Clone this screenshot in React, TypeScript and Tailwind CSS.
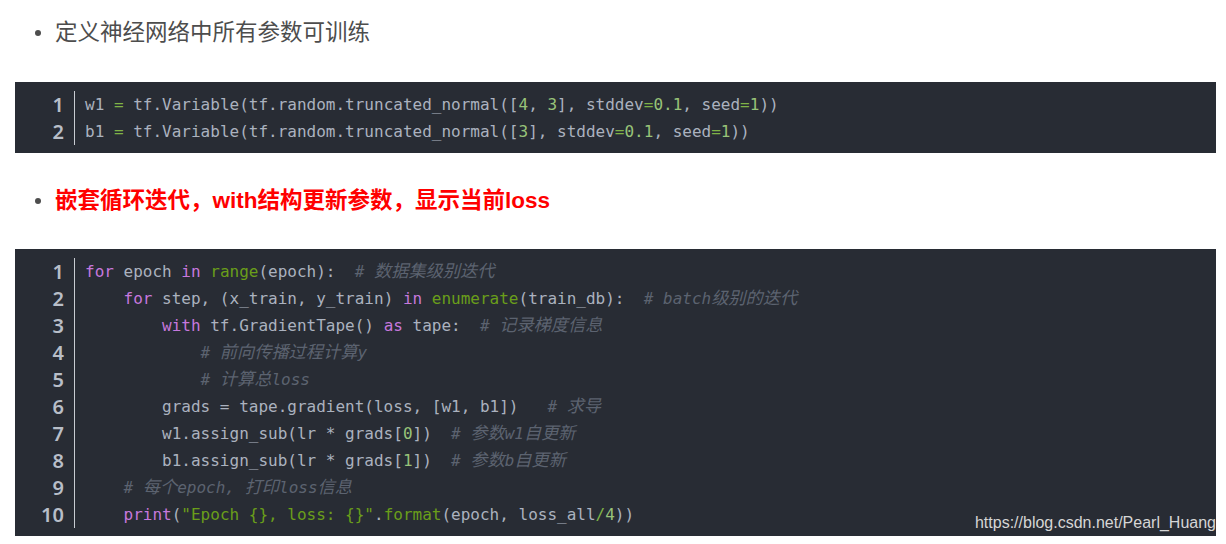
type Tok = [string, string?];

const C = {
  kw: "text-[#c678dd]",
  fn: "text-[#6a9e1a]",
  num: "text-[#98c379]",
  op: "text-[#7fb347]",
  cm: "text-[#5c6370] italic",
};

const Comment = ({ text }: { text: string }) => {
  const parts = text.split(/([\u3000-\u9fff\uff00-\uffef]+)/).filter(Boolean);
  return (
    <span className={C.cm}>
      {parts.map((p, i) =>
        /[\u3000-\u9fff\uff00-\uffef]/.test(p) ? (
          <span key={i} className="text-[17.2px]">
            {p}
          </span>
        ) : (
          <span key={i}>{p}</span>
        )
      )}
    </span>
  );
};

const block1: Tok[][] = [
  [
    ["w1 "],
    ["=", C.op],
    [" tf.Variable(tf.random.truncated_normal(["],
    ["4", C.num],
    [", "],
    ["3", C.num],
    ["], stddev"],
    ["=", C.op],
    ["0.1", C.num],
    [", seed"],
    ["=", C.op],
    ["1", C.num],
    ["))"],
  ],
  [
    ["b1 "],
    ["=", C.op],
    [" tf.Variable(tf.random.truncated_normal(["],
    ["3", C.num],
    ["], stddev"],
    ["=", C.op],
    ["0.1", C.num],
    [", seed"],
    ["=", C.op],
    ["1", C.num],
    ["))"],
  ],
];

const block2: Tok[][] = [
  [["for", C.kw], [" epoch "], ["in", C.kw], [" "], ["range", C.fn], ["(epoch):  "], ["# 数据集级别迭代", "cm"]],
  [
    ["    "],
    ["for", C.kw],
    [" step, (x_train, y_train) "],
    ["in", C.kw],
    [" "],
    ["enumerate", C.fn],
    ["(train_db):  "],
    ["# batch级别的迭代", "cm"],
  ],
  [["        "], ["with", C.kw], [" tf.GradientTape() "], ["as", C.kw], [" tape:  "], ["# 记录梯度信息", "cm"]],
  [["            "], ["# 前向传播过程计算y", "cm"]],
  [["            "], ["# 计算总loss", "cm"]],
  [["        grads = tape.gradient(loss, [w1, b1])   "], ["# 求导", "cm"]],
  [["        w1.assign_sub(lr * grads["], ["0", C.num], ["])  "], ["# 参数w1自更新", "cm"]],
  [["        b1.assign_sub(lr * grads["], ["1", C.num], ["])  "], ["# 参数b自更新", "cm"]],
  [["    "], ["# 每个epoch, 打印loss信息", "cm"]],
  [
    ["    "],
    ["print", C.kw],
    ["("],
    ['"Epoch {}, loss: {}"', C.fn],
    ["."],
    ["format", C.fn],
    ["(epoch, loss_all"],
    ["/", C.op],
    ["4", C.num],
    ["))"],
  ],
];

const CodeBlock = ({ lines, watermark }: { lines: Tok[][]; watermark?: boolean }) => (
  <div className="relative w-[1201px] bg-[#282c34] pt-[9px] pb-[8px]">
    <div className="flex">
      <div className="w-[60px] border-r border-[#c8ccd2] pr-[10px] text-right font-['Noto_Sans','Liberation_Sans',sans-serif] text-[20px] font-semibold leading-[27px] text-[#b8bec8]">
        {lines.map((_, i) => (
          <div key={i}>{i + 1}</div>
        ))}
      </div>
      <div className="pl-[10px] font-['DejaVu_Sans_Mono','Noto_Sans_CJK_SC',monospace] text-[16px] leading-[27px] text-[#abb2bf]">
        {lines.map((line, i) => (
          <div key={i} className="whitespace-pre">
            {line.map(([t, c], j) =>
              c === "cm" ? (
                <Comment key={j} text={t} />
              ) : (
                <span key={j} className={c}>
                  {t}
                </span>
              )
            )}
          </div>
        ))}
      </div>
    </div>
    {watermark && (
      <div className="absolute right-0 bottom-[4px] font-['Liberation_Sans',sans-serif] text-[16px] leading-[18px] text-[#d6d6d6]">
        https://blog.csdn.net/Pearl_Huang
      </div>
    )}
  </div>
);

const Bullet = ({ text, red }: { text: string; red?: boolean }) => (
  <div className="flex items-center pl-[35px]">
    <span className="mr-[14px] h-[6px] w-[6px] rounded-full bg-[#4d4d4d]" />
    <span
      className={
        red
          ? "font-['Liberation_Sans','Noto_Sans_CJK_SC',sans-serif] text-[22.5px] font-bold leading-[30px] text-[#ff0000]"
          : "font-['Liberation_Sans','Noto_Sans_CJK_SC',sans-serif] text-[22.5px] leading-[30px] text-[#4d4d4d]"
      }
    >
      {text}
    </span>
  </div>
);

export default function App() {
  return (
    <div className="h-[544px] w-[1226px] overflow-hidden bg-white pt-[18px]">
      <Bullet text="定义神经网络中所有参数可训练" />
      <div className="mt-[34px] pl-[15px]">
        <CodeBlock lines={block1} />
      </div>
      <div className="mt-[33px]">
        <Bullet text="嵌套循环迭代，with结构更新参数，显示当前loss" red />
      </div>
      <div className="mt-[33px] pl-[15px]">
        <CodeBlock lines={block2} watermark />
      </div>
    </div>
  );
}
